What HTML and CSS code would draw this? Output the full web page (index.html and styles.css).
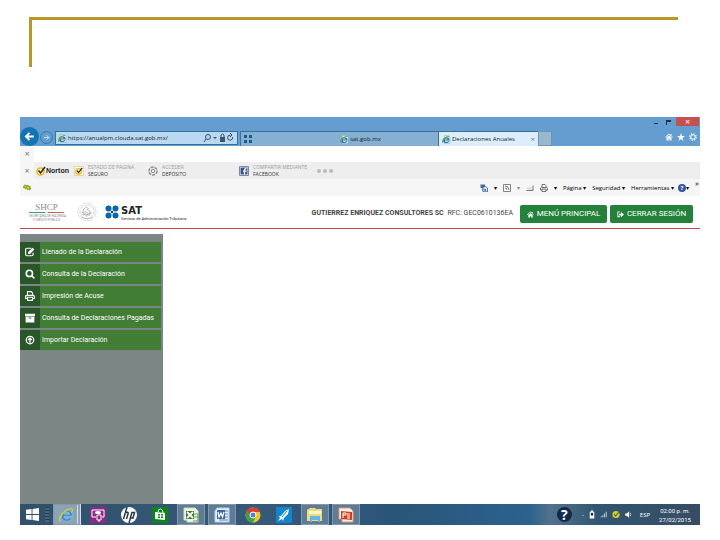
FILE: index.html
```
<!DOCTYPE html>
<html lang="es">
<head>
    <meta charset="UTF-8">
    <meta name="viewport" content="width=device-width, initial-scale=1.0">
    <title>Declaraciones Anuales</title>
    <link rel="stylesheet" href="styles.css">
</head>
<body>
    <svg width="0" height="0" class="defs" aria-hidden="true">
        <symbol id="ie" viewBox="0 0 20 20">
            <path d="M18 11.500H7.500c0 4 5 4.500 7 2h3.300C15 20 4 19.500 4 11 4 1 18.500 1 18 11.500zM7.500 9h7c-.5-4-6.500-4-7 0z" fill="#2f8fd0" stroke="#a9dcf5" stroke-width=".6"/>
            <path d="M3 18C-1 14 9 2 17 2c2 0 1 3 0 4" fill="none" stroke="#d8c83a" stroke-width="1.8"/>
        </symbol>
        <symbol id="page" viewBox="0 0 20 20">
            <path d="M5 1h9l4 4v14H5z" fill="#dcebf5" stroke="#8aa7b8"/>
            <path d="M17 12H6.500c0 4 5 4 7 2h3C14 20 2 19 2 11.500 2 2 17.500 3 17 12zM6.500 10h6c-.5-3-5.500-3-6 0z" fill="#2277b8"/>
            <path d="M2 17C-1 13 8 3 16 3" fill="none" stroke="#6fae3c" stroke-width="3"/>
        </symbol>
        <symbol id="norton" viewBox="0 0 20 20">
            <circle cx="9" cy="11" r="7" fill="#fff" stroke="#f2b400" stroke-width="3"/>
            <path d="M5 9l4 5 9-12" fill="none" stroke="#222" stroke-width="3"/>
        </symbol>
        <symbol id="print" viewBox="0 0 16 16">
            <path d="M4 7V1h6l2 2v4M4 12H1V9q0-2 2-2h10q2 0 2 2v3h-3M4 10h8v5H4z" fill="none" stroke="currentColor" stroke-width="1.8"/>
        </symbol>
        <symbol id="home" viewBox="0 0 16 16">
            <path d="M0 8l8-7 3 3V2h2v4l3 2-1 1-7-6-7 6zM3 9l5-4 5 4v6H9v-4H7v4H3z" fill="currentColor"/>
        </symbol>
    </svg>

    <div class="title-rule"></div>

    <div class="window">
        <div class="browser-bar">
            <div class="caption">
                <button class="min" aria-label="Minimizar"></button>
                <button class="max" aria-label="Restaurar"></button>
                <button class="close" aria-label="Cerrar">×</button>
            </div>
            <div class="nav">
                <button class="back" aria-label="Atrás"><svg viewBox="0 0 18 18"><path d="M16 9H4M9 3L3 9l6 6" fill="none" stroke="#fff" stroke-width="3"/></svg></button>
                <button class="forward" aria-label="Adelante"><svg viewBox="0 0 18 18"><path d="M2 9h13M9 3l6 6-6 6" fill="none" stroke="#c9e3f7" stroke-width="2.4"/></svg></button>
                <div class="address">
                    <svg class="icon"><use href="#page"/></svg>
                    <input type="text" aria-label="Dirección" value="https://anualpm.clouda.sat.gob.mx/">
                    <svg class="address-tools" viewBox="0 0 32 10" fill="none" stroke="#3c5368">
                        <circle cx="5" cy="4" r="2.5"/><path d="M3 6L1 9"/>
                        <path d="M10 4h4l-2 2z" fill="#3c5368" stroke="none"/>
                        <path d="M17 4h5v5h-5z" fill="#3c5368" stroke="none"/><path d="M18 5V2q1.500-2 3 0v3"/>
                        <path d="M29.500 4a2.500 2.500 0 1 1-2-1.800M27 0l2 2-2 2"/>
                    </svg>
                </div>
                <div class="tab">
                    <svg class="dots" viewBox="0 0 8 10"><path d="M0 1h3v3H0zM5 1h3v3H5zM0 6h3v3H0zM5 6h3v3H5z" fill="#1a5e88"/></svg>
                    <span class="tab-name"><svg class="icon"><use href="#page"/></svg>sat.gob.mx</span>
                </div>
                <div class="tab active">
                    <svg class="icon"><use href="#page"/></svg>
                    <span>Declaraciones Anuales</span>
                    <button class="tab-close" aria-label="Cerrar pestaña">×</button>
                </div>
                <button class="new-tab" aria-label="Nueva pestaña"></button>
                <div class="tools">
                    <svg viewBox="0 0 16 16"><use href="#home"/></svg>
                    <svg viewBox="0 0 16 16"><path d="M8 0l2 6h6l-5 4 2 6-5-4-5 4 2-6-5-4h6z" fill="#fff"/></svg>
                    <svg viewBox="0 0 16 16" fill="none" stroke="#fff"><circle cx="8" cy="8" r="4.500" stroke-width="2"/><circle cx="8" cy="8" r="6.500" stroke-width="2.400" stroke-dasharray="2.500 2.600"/></svg>
                </div>
            </div>
        </div>

        <div class="notice"><button class="bar-close" aria-label="Cerrar barra">×</button></div>

        <div class="norton">
            <button class="bar-close" aria-label="Cerrar Norton">×</button>
            <div class="brand"><svg><use href="#norton"/></svg>Norton</div>
            <div class="norton-item page-state">
                <svg class="boxed"><use href="#norton"/></svg>
                <p>ESTADO DE PÁGINA<b>SEGURO</b></p>
            </div>
            <div class="norton-item vault">
                <svg viewBox="0 0 20 20" fill="none" stroke="#8c8c8c"><circle cx="10" cy="10" r="8" stroke-width="3" stroke-dasharray="6 2"/><circle cx="10" cy="10" r="3.500" stroke-width="2"/></svg>
                <p>ACCEDER<b>DEPÓSITO</b></p>
            </div>
            <div class="norton-item">
                <svg viewBox="0 0 20 20"><path d="M1 1h18v18H1z" fill="#fff" stroke="#7c86a5" stroke-width="2"/><path d="M3 3h14v14H3z" fill="#38518f"/><path d="M15 5h-1q-3 0-3 3v9M8 10h7" fill="none" stroke="#fff" stroke-width="2.500"/></svg>
                <p>COMPARTIR MEDIANTE<b>FACEBOOK</b></p>
            </div>
            <div class="more"><i></i><i></i><i></i></div>
        </div>

        <div class="command-bar">
            <svg class="leaf" viewBox="0 0 16 14"><path d="M0 5l3-4 4 1 3 0 5 3 1 4-2 4-3-2-2 2-2-3-3 1-1-3-3 0z" fill="#86ad25"/><path d="M3 4l3 2M8 6l4 2M7 9l2 1" stroke="#f4e04a" stroke-width="2"/></svg>
            <div class="commands">
                <svg viewBox="0 0 16 16"><path d="M1 1h9v13H5V8H1z" fill="#426ca5"/><path d="M6 7l4-3 5 4v8H6z" fill="#dbe7f5" stroke="#28528c" stroke-width="1.500"/><path d="M9 10h3v5H9z" fill="#426ca5"/></svg>
                <span class="arrow">▾</span>
                <svg viewBox="0 0 16 16" fill="none" stroke="#777"><path d="M1 1h14v14H1z" stroke-width="1.800"/><path d="M4 4q8 0 8 8M4 8q4 0 4 4" stroke-width="1.800"/></svg>
                <span class="arrow faded">▾</span>
                <svg viewBox="0 0 16 16"><path d="M1 13h13V3" fill="none" stroke="#777" stroke-width="2"/><path d="M2 11V7h10v4z" fill="#ddd"/></svg>
                <svg class="printer" viewBox="0 0 16 16"><use href="#print"/></svg>
                <span class="arrow">▾</span>
                <button>Página ▾</button>
                <button>Seguridad ▾</button>
                <button>Herramientas ▾</button>
                <button class="help"><span>?</span>▾</button>
                <b class="overflow">»</b>
            </div>
        </div>

        <header class="site-header">
            <div class="shcp">
                <strong>SHCP</strong>
                <small>SECRETARÍA DE HACIENDA<br>Y CRÉDITO PÚBLICO</small>
            </div>
            <svg class="seal" viewBox="0 0 40 40" fill="none" stroke="#a5a5a5">
                <circle cx="20" cy="20" r="18" stroke-dasharray="2 1"/><circle cx="20" cy="20" r="14" stroke-width="3" stroke-dasharray="1 1.500" stroke="#c6c6c6"/>
                <path d="M11 22q1-10 8-12l4 3-3 2q8 2 8 9l-4-3 1 6-4-3-2 5-3-5-4 3 1-6zM15 18l8 5M13 21l9 5M9 30q11 7 22 0" stroke-width="1.500"/>
            </svg>
            <svg class="sat-dots" viewBox="0 0 28 28"><g fill="#0866ae"><circle cx="7" cy="7" r="6"/><circle cx="21" cy="7" r="6"/><circle cx="7" cy="21" r="6"/><circle cx="21" cy="21" r="6"/></g><path d="M11 14l3-3 3 3-3 3z" fill="#222"/></svg>
            <div class="sat"><strong>SAT</strong><small>Servicio de Administración Tributaria</small></div>
            <p class="taxpayer"><b>GUTIERREZ ENRIQUEZ CONSULTORES SC</b> RFC: GEC0610136EA</p>
            <button class="btn menu-main"><svg><use href="#home"/></svg>MENÚ PRINCIPAL</button>
            <button class="btn"><svg viewBox="0 0 16 16"><path d="M7 1H1v13h6v-2H3V3h4zM5 6h4V2l7 6-7 6v-4H5z" fill="currentColor"/></svg>CERRAR SESIÓN</button>
        </header>

        <main>
            <nav class="sidebar">
                <a href="#"><span><svg viewBox="0 0 16 16"><path d="M10 2H3Q1 2 1 4v8q0 2 2 2h8q2 0 2-2V9" fill="none" stroke="#fff" stroke-width="1.800"/><path d="M5 11V8l7-7 3 3-7 7z" fill="#fff"/></svg></span>Llenado de la Declaración</a>
                <a href="#"><span><svg viewBox="0 0 16 16" fill="none" stroke="#fff" stroke-width="2.500"><circle cx="7" cy="7" r="5"/><path d="M10 10l5 5"/></svg></span>Consulta de la Declaración</a>
                <a href="#"><span><svg><use href="#print"/></svg></span>Impresión de Acuse</a>
                <a href="#"><span><svg viewBox="0 0 16 16" fill="#fff"><path d="M0 1h16v4H0zM1 6h14v9H1z"/><path d="M6 8h4" stroke="#285629" stroke-width="1.500"/></svg></span>Consulta de Declaraciones Pagadas</a>
                <a href="#"><span><svg viewBox="0 0 16 16" fill="none" stroke="#fff" stroke-width="2"><circle cx="8" cy="8" r="6"/><path d="M8 13V5M5 8l3-3 3 3"/></svg></span>Importar Declaración</a>
            </nav>
        </main>

        <footer class="taskbar">
            <button class="start" aria-label="Inicio"><svg viewBox="0 0 14 14"><path d="M0 2l6-1v5.500H0zM7 1l7-1v6.500H7zM0 7.500h6V13l-6-1zM7 7.500h7V14l-7-1z" fill="#fff"/></svg></button>
            <i class="grip"></i>
            <div class="tasks">
                <button class="open stacked" aria-label="Internet Explorer"><svg><use href="#ie"/></svg></button>
                <button aria-label="Captura"><svg viewBox="0 0 16 16"><path d="M0 0h16v16H0z" fill="#8c2b83"/><path d="M6 10H2V3h12v7h-2M7 8h4v5H7zM9 13v2" fill="none" stroke="#fff"/><ellipse cx="8" cy="5.500" rx="3" ry="1.500" fill="#fff"/></svg></button>
                <button aria-label="HP"><svg viewBox="0 0 16 16"><circle cx="8" cy="8" r="8" fill="#fff"/><path d="M6 0L2.500 12M4 6q4-2 3 1l-1.500 5M11 5L8 16M10.500 5.500h3L12 11H9" fill="none" stroke="#26384b" stroke-width="1.500"/></svg></button>
                <button aria-label="Tienda"><svg viewBox="0 0 16 16"><path d="M0 0h16v16H0z" fill="#078517"/><path d="M3 5l10 1v7L3 12z" fill="#fff"/><path d="M6 5q0-3 2.500-3T11 6" fill="none" stroke="#fff"/><path d="M6 7h2v1.500H6zM9 7h2v1.500H9zM6 9.500h2V11H6zM9 9.500h2V11H9z" fill="#078517"/></svg></button>
                <button class="open" aria-label="Excel"><svg viewBox="0 0 16 16"><path d="M1 1h11l3 3v11H4v-2H1z" fill="#eef5e7" stroke="#cfe0c2"/><path d="M10 7h5v7h-5M10 10h5" fill="none" stroke="#67a052"/><path d="M3 4h8v8H3z" fill="#357f35"/><path d="M4 5l6 6M10 5l-6 6" stroke="#fff" stroke-width="1.800"/></svg></button>
                <button class="open" aria-label="Word"><svg viewBox="0 0 16 16"><path d="M3 1h12v14H1V4z" fill="#eaf1fb" stroke="#b9cce8"/><path d="M11 4h3M11 7h3M11 10h3M5 13h9" stroke="#577fb9"/><path d="M3 3h8v9H3z" fill="#3466ac"/><path d="M4 5l1 5 2-4 1.500 4L10 5" fill="none" stroke="#fff" stroke-width="1.300"/></svg></button>
                <button aria-label="Chrome"><svg viewBox="0 0 16 16"><circle cx="8" cy="8" r="7.500" fill="#f2c52e"/><path d="M1.500 4.300A7.500 7.500 0 0 1 15 5H8L5 9z" fill="#d9402f"/><path d="M1.500 4.300A7.500 7.500 0 0 0 8 15.500l3-6-6-1z" fill="#3ca14a"/><circle cx="8" cy="8" r="3" fill="#4c86d0" stroke="#fff"/></svg></button>
                <button aria-label="Inicio rápido"><svg viewBox="0 0 16 16"><path d="M0 0h16v16H0z" fill="#1187c9"/><path d="M13 2l-4 2-4 5-2 0 1 2-2 3 4-2 1 2 1-3 4-4z" fill="#fff"/><path d="M6 10l5-6" stroke="#1187c9"/></svg></button>
                <button class="open" aria-label="Explorador"><svg viewBox="0 0 16 16"><path d="M0 3l3-2h5l1 1h6v12H0z" fill="#eadb86"/><path d="M2 4h12v3H2z" fill="#fff7c8"/><path d="M4 15v-5h8v5M4 12h8" fill="none" stroke="#68b5df" stroke-width="2"/></svg></button>
                <button class="open" aria-label="PowerPoint"><svg viewBox="0 0 16 16"><path d="M1 1h11l3 3v11H4v-3H1z" fill="#fff2ec" stroke="#df977e"/><path d="M3 4l11 1v8L3 12z" fill="#c9411e"/><path d="M5 11V6h3v2H5M9 7h3M9 9h3M9 11h3" fill="none" stroke="#fff"/></svg></button>
            </div>
            <div class="tray">
                <span class="tray-help">?</span>
                <span>-</span>
                <svg viewBox="0 0 12 16"><path d="M4 1h4v2h2v12H2V3h2z" fill="#fff"/><path d="M4 5h4v5H4z" fill="#182e41"/></svg>
                <svg viewBox="0 0 12 16"><path d="M1 13v-2M4 13V9M7 13V6M10 13V3" stroke="#d5e0e8" stroke-width="1.500"/></svg>
                <svg viewBox="0 0 20 20"><circle cx="10" cy="10" r="9" fill="#e6c72e"/><path d="M5 9l4 5 8-10" fill="none" stroke="#36833a" stroke-width="3"/></svg>
                <svg viewBox="0 0 12 16"><path d="M1 6h3l4-4v12l-4-4H1z" fill="#fff"/><path d="M10 5q2 3 0 6" fill="none" stroke="#fff"/></svg>
                <span class="language">ESP</span>
                <time datetime="2015-02-27T14:00">02:00 p. m.<br>27/02/2015</time>
            </div>
        </footer>
    </div>
</body>
</html>
```
FILE: styles.css
```
* {
    box-sizing: border-box;
}
body {
    display: flex;
    flex-direction: column;
    min-height: 100vh;
    margin: 0;
    padding: 17px 20px 15px;
    background: #fff;
    color: #222;
    font-family: "Open Sans", "Noto Sans", sans-serif;
    font-size: 6px;
    line-height: 8px;
}
button, input {
    padding: 0;
    border: 0;
    background: none;
    color: inherit;
    font: inherit;
}
button {
    cursor: pointer;
}
p {
    margin: 0;
}
svg {
    display: block;
    flex: none;
}
.defs {
    position: absolute;
}
.title-rule {
    height: 50px;
    margin: 0 22px 50px 9px;
    border-top: 3px solid #b9962c;
    border-left: 3px solid #b9962c;
}
.window {
    display: flex;
    flex: 1;
    flex-direction: column;
}

/* browser */
.browser-bar {
    height: 29px;
    background: #649dcf;
}
.caption {
    display: flex;
    justify-content: flex-end;
    height: 14px;
    padding-right: 1px;
}
.caption button {
    height: 9px;
}
.caption .min {
    width: 4px;
    height: 7px;
    margin-right: 8px;
    border-bottom: 1px solid #1f3347;
}
.caption .max {
    width: 5px;
    height: 5px;
    margin: 3px 5px 0 0;
    border-top: 2px solid #1f3347;
    border-left: 1px solid #1f3347;
}
.caption .close {
    width: 23px;
    background: #c5504d;
    color: #fff;
    font-size: 9px;
    line-height: 8px;
}
.nav {
    display: flex;
    height: 15px;
}
.back {
    width: 19px;
    height: 19px;
    margin: -4px 1px 0 0;
    padding: 4px;
    border-radius: 50%;
    background: #1274b5;
}
.forward {
    width: 13px;
    height: 13px;
    margin: 0 2px 0 0;
    padding: 2px;
    border: 1px solid #3b78aa;
    border-radius: 50%;
}
.address {
    display: flex;
    align-items: center;
    width: 183px;
    height: 14px;
    margin-right: 2px;
    padding: 0 2px;
    border: 1px solid #386f9d;
    background: #b9d9f2;
}
.icon {
    width: 9px;
    height: 9px;
}
.address input {
    flex: 1;
    min-width: 0;
    margin-left: 1px;
    font-size: 6px;
}
.address-tools {
    width: 32px;
    height: 10px;
}
.tab {
    display: flex;
    align-items: center;
    width: 198px;
    padding: 0 3px;
    border: solid #386f9d;
    border-width: 1px 0 0 1px;
    background: #85b0d4;
}
.dots {
    width: 8px;
    height: 10px;
}
.tab-name {
    display: flex;
    flex: 1;
    gap: 1px;
    justify-content: center;
    padding-left: 34px;
}
.tab.active {
    gap: 1px;
    width: 100px;
    background: #dceefb;
}
.tab-close {
    margin-left: auto;
    color: #777;
    font-size: 8px;
}
.new-tab {
    width: 14px;
    border: 1px solid #6c96b5;
    background: #9ab8cb;
}
.tools {
    display: flex;
    gap: 4px;
    margin: 2px 3px 0 auto;
    color: #fff;
}
.tools svg {
    width: 8px;
    height: 8px;
}
.notice, .norton, .command-bar {
    display: flex;
    align-items: center;
}
.notice {
    height: 16px;
    padding-left: 4px;
    background: linear-gradient(to right, #f6f6f6 14px, #fff 14px);
}
.bar-close {
    width: 6px;
    color: #777;
    font-size: 9px;
}
.norton {
    height: 17px;
    padding-left: 4px;
    background: linear-gradient(to right, #f6f6f6 14px, #eee 14px);
}
.brand {
    display: flex;
    align-items: center;
    width: 38px;
    margin-left: 6px;
    font-family: "Liberation Sans", Arial, sans-serif;
    font-size: 7px;
    font-weight: bold;
}
.brand svg, .norton-item svg {
    width: 10px;
    height: 10px;
}
.norton-item .boxed {
    border: 1px solid #e4d9ae;
    background: #fff;
}
.norton-item {
    display: flex;
    align-items: center;
    gap: 4px;
    color: #999;
    font-size: 5px;
    line-height: 7px;
    white-space: nowrap;
}
.norton-item b {
    display: block;
    color: #333;
    font-weight: normal;
}
.page-state {
    width: 74px;
}
.vault {
    width: 91px;
}
.more {
    display: flex;
    gap: 2px;
    margin-left: 10px;
}
.more i {
    width: 4px;
    height: 4px;
    border-radius: 50%;
    background: #bbb;
}
.command-bar {
    justify-content: space-between;
    height: 17px;
    padding: 0 1px 0 3px;
    background: #f6f6f6;
}
.leaf {
    width: 8px;
    height: 7px;
}
.commands {
    display: flex;
    align-items: center;
    gap: 6px;
    height: 17px;
    color: #000;
}
.commands svg {
    width: 8px;
    height: 8px;
}
.commands .printer {
    color: #666;
}
.arrow {
    width: 3px;
}
.commands .faded {
    color: #888;
}
.help {
    display: flex;
    margin-left: -2px;
}
.help span {
    width: 8px;
    height: 8px;
    border-radius: 50%;
    background: #315999;
    color: #fff;
    font-weight: bold;
}
.overflow {
    align-self: flex-start;
    font-size: 8px;
    font-weight: normal;
}

/* site */
.site-header {
    display: flex;
    align-items: center;
    height: 33px;
    padding: 0 7px 0 9px;
    border-bottom: 1px solid #c2494d;
    font-family: Roboto, sans-serif;
    font-size: 7px;
    white-space: nowrap;
}
.shcp {
    width: 35px;
    color: #8a8a8a;
    text-align: center;
}
.shcp strong {
    display: block;
    border-bottom: 1px solid #ddd;
    border-image: linear-gradient(to right, #35a07e 45%, #ddd 45% 55%, #d4595f 55%) 1;
    border-width: 0 0 1px;
    font: 9px/9px "Liberation Serif", serif;
}
.shcp small {
    display: block;
    padding-top: 1px;
    font-size: 3px;
    line-height: 4px;
}
.seal {
    width: 20px;
    height: 20px;
    margin: 0 8px 0 13px;
}
.sat-dots {
    width: 14px;
    height: 14px;
    margin-right: 2px;
}
.sat strong {
    display: block;
    margin-top: 2px;
    font: bold 10px/11px "DejaVu Sans", sans-serif;
}
.sat small {
    display: block;
    font-size: 4px;
    line-height: 5px;
}
.taxpayer {
    margin: 2px 7px 0 auto;
    color: #444;
}
.taxpayer b {
    margin-right: 2px;
}
.btn {
    display: flex;
    align-items: center;
    justify-content: center;
    gap: 3px;
    width: 83px;
    height: 18px;
    margin-top: 4px;
    border-radius: 2px;
    background: #23813a;
    color: #fff;
    font-size: 8px;
}
.btn svg {
    width: 7px;
    height: 7px;
}
.menu-main {
    width: 87px;
    margin-right: 3px;
}
main {
    display: flex;
    flex: 1;
    padding-top: 5px;
}
.sidebar {
    display: flex;
    flex-direction: column;
    gap: 2px;
    width: 143px;
    padding: 8px 2px 0 0;
    background: #7c8785;
}
.sidebar a {
    display: flex;
    align-items: center;
    gap: 2px;
    height: 20px;
    background: #427d36;
    color: #fff;
    font-family: Roboto, sans-serif;
    font-size: 7px;
    line-height: 10px;
    text-decoration: none;
    white-space: nowrap;
}
.sidebar span {
    display: flex;
    align-items: center;
    justify-content: center;
    width: 20px;
    height: 20px;
    background: #285629;
}
.sidebar svg {
    width: 10px;
    height: 10px;
}

/* taskbar */
.taskbar {
    display: flex;
    align-items: center;
    height: 21px;
    padding: 0 9px 0 6px;
    background: linear-gradient(to right, #30506b, #37597a 35%, #2b5578 55%, #2a638e 75%, #52728b 78%, #315671 85%, #364d63);
    color: #fff;
}
.start svg {
    width: 13px;
    height: 13px;
}
.grip {
    width: 4px;
    height: 15px;
    margin: 0 4px 0 6px;
    background: repeating-linear-gradient(#243b50 0 1px, #47657f 1px 3px);
}
.tasks {
    display: flex;
    gap: 3px;
}
.tasks button {
    display: flex;
    align-items: center;
    justify-content: center;
    width: 28px;
    height: 21px;
}
.tasks svg {
    width: 16px;
    height: 16px;
}
.tasks .open {
    border: 1px solid #8097ac;
    background: #607b94;
}
.tasks .stacked {
    border-right: 4px double #d3dee7;
    background: #8ca3b6;
}
.tray {
    display: flex;
    align-items: center;
    gap: 4px;
    margin-left: auto;
}
.tray svg {
    width: 8px;
    height: 9px;
}
.tray-help {
    width: 15px;
    height: 15px;
    margin-right: 6px;
    border-radius: 50%;
    background: #10294b;
    font-size: 14px;
    font-weight: bold;
    line-height: 15px;
    text-align: center;
}
.language {
    margin: 0 5px 0 4px;
}
time {
    font-family: Roboto, sans-serif;
    font-size: 6px;
    line-height: 9px;
    text-align: center;
}
```
